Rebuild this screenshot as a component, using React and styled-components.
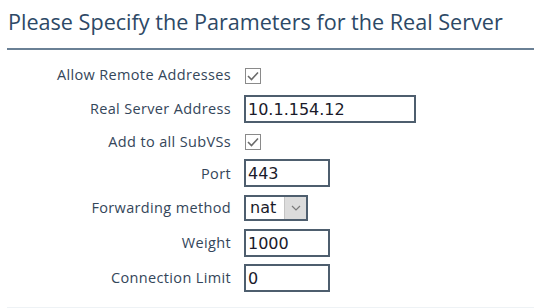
import React from 'react';
import styled, { createGlobalStyle } from 'styled-components';

const GlobalStyle = createGlobalStyle`
  body {
    margin: 0;
    background: #ffffff;
    font-family: "Open Sans", "Liberation Sans", sans-serif;
  }
`;

const Page = styled.div`
  margin-left: 7px;
  width: 527px;
`;

const Title = styled.h2`
  margin: 0;
  padding: 7px 0 0 1px;
  height: 50px;
  box-sizing: border-box;
  font-size: 21.6px;
  font-weight: 400;
  color: #2d4966;
  border-bottom: 2px solid #6a8095;
  line-height: 30px;
  white-space: nowrap;
`;

const Form = styled.div`
  display: grid;
  grid-template-columns: 224px auto;
  grid-template-rows: 33px 35px 30px 34px 35px 35px 35px;
  column-gap: 13px;
  align-items: center;
  margin-top: 8px;
`;

const Label = styled.label`
  text-align: right;
  font-size: 14.5px;
  letter-spacing: 0.35px;
  font-weight: 500;
  color: #34465a;
  white-space: nowrap;
`;

const Check = styled.span`
  display: inline-flex;
  align-items: center;
  justify-content: center;
  width: 16px;
  height: 16px;
  box-sizing: border-box;
  border: 1px solid #8a8a8a;
  background: #fff;
  margin-left: 1px;
`;

const TextBox = styled.input`
  width: ${(p) => p.$w}px;
  height: 28px;
  box-sizing: border-box;
  border: 2px solid #4e5e6e;
  padding: 1px 2px 0;
  font-family: "DejaVu Sans", sans-serif;
  font-size: 16px;
  color: #1a1a2a;
  outline: none;
`;

const Select = styled.div`
  display: inline-flex;
  width: 64px;
  height: 26px;
  box-sizing: border-box;
  border: 2px solid #4e5e6e;
  background: #fff;
`;

const SelectValue = styled.span`
  flex: 1;
  padding-left: 4px;
  font-family: "DejaVu Sans", sans-serif;
  font-size: 16px;
  line-height: 22px;
  color: #1a1a2a;
`;

const SelectButton = styled.span`
  width: 21px;
  display: flex;
  align-items: center;
  justify-content: center;
  background: #dcdcdc;
  border-left: 1px solid #c4c4c4;
`;

const Footer = styled.div`
  margin-top: 12px;
  height: 4px;
  background: #eef2f5;
`;

const Tick = () => (
  <svg width="12" height="10" viewBox="0 0 12 10">
    <path d="M1 5 L4.5 8.5 L11 1.5" fill="none" stroke="#6a6a6a" strokeWidth="1.6" />
  </svg>
);

const Chevron = () => (
  <svg width="10" height="6" viewBox="0 0 10 6">
    <path d="M1 1 L5 5 L9 1" fill="none" stroke="#7a7a7a" strokeWidth="1.2" />
  </svg>
);

export default function App() {
  return (
    <Page>
      <GlobalStyle />
      <Title>Please Specify the Parameters for the Real Server</Title>
      <Form>
        <Label>Allow Remote Addresses</Label>
        <div><Check><Tick /></Check></div>
        <Label>Real Server Address</Label>
        <div><TextBox $w={172} defaultValue="10.1.154.12" /></div>
        <Label>Add to all SubVSs</Label>
        <div><Check><Tick /></Check></div>
        <Label>Port</Label>
        <div><TextBox $w={86} defaultValue="443" /></div>
        <Label>Forwarding method</Label>
        <div>
          <Select>
            <SelectValue>nat</SelectValue>
            <SelectButton><Chevron /></SelectButton>
          </Select>
        </div>
        <Label>Weight</Label>
        <div><TextBox $w={86} defaultValue="1000" /></div>
        <Label>Connection Limit</Label>
        <div><TextBox $w={86} defaultValue="0" /></div>
      </Form>
      <Footer />
    </Page>
  );
}
